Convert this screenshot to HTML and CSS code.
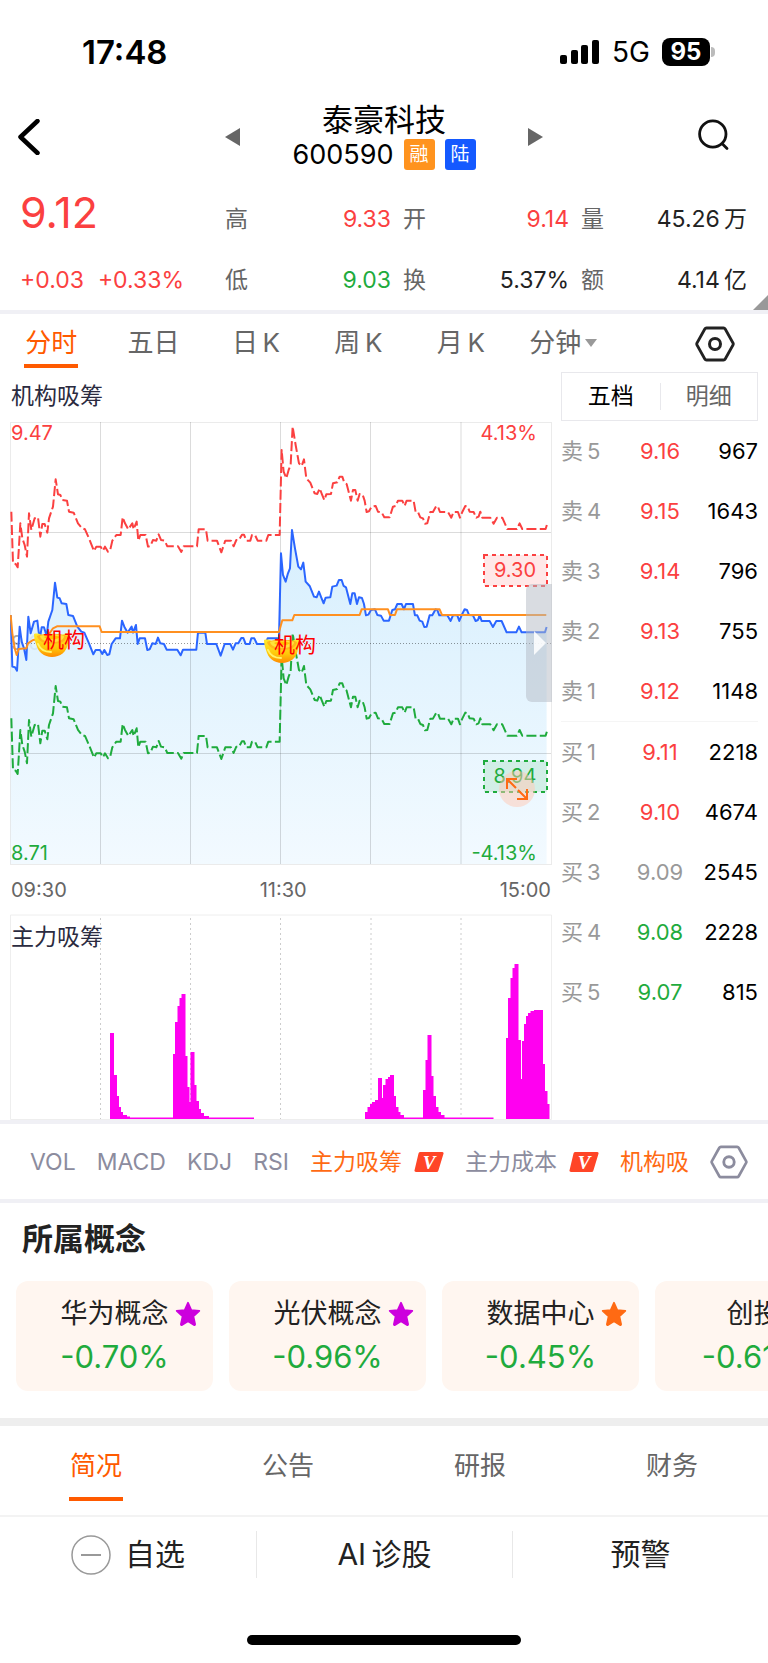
FILE: index.html
```html
<!DOCTYPE html>
<html lang="zh-CN">

<head>
    <meta charset="UTF-8">
    <meta name="viewport" content="width=device-width, initial-scale=1.0">
    <title>泰豪科技 600590</title>
    <link rel="stylesheet" href="styles.css">
</head>

<body>

    <!-- shared shapes -->
    <svg class="defs" width="0" height="0" aria-hidden="true">
        <defs>
            <symbol id="hex" viewBox="0 0 40 36">
                <path d="M11.500 2h17a2 2 0 0 1 1.700 1L38 17a2 2 0 0 1 0 2l-7.800 14a2 2 0 0 1-1.700 1h-17a2 2 0 0 1-1.700-1L2 19a2 2 0 0 1 0-2L9.800 3a2 2 0 0 1 1.700-1z" fill="none" stroke="currentColor" stroke-width="2.800" />
                <circle cx="20" cy="18" r="5.500" fill="none" stroke="currentColor" stroke-width="3" />
            </symbol>
            <symbol id="star" viewBox="0 0 24 24">
                <path d="M12 1.500l3.100 6.800 7.400.8-5.500 5 1.600 7.300c.1.800-.5 1.100-1.100.8L12 18.800l-5.500 3.400c-.6.300-1.200 0-1.100-.8L7 14.100l-5.500-5 7.400-.8z" fill="currentColor" stroke="currentColor" stroke-width="1.500" stroke-linejoin="round" />
            </symbol>
            <symbol id="vip" viewBox="0 0 30 22">
                <path d="M6 1h22a1.500 1.500 0 0 1 1.400 2l-5 16.500a2 2 0 0 1-2 1.500H2a1.500 1.500 0 0 1-1.400-2L4.500 2.500A2 2 0 0 1 6 1z" fill="#ff4527" />
                <text x="15" y="18" text-anchor="middle" class="vip-letter">V</text>
            </symbol>
            <symbol id="ingot" viewBox="0 0 36 26">
                <path d="M0 2c3-1 6 0 8 1h20c2-1 5-2 8-1 0 4-1 7-2 9-1 9-8 14-16 14S4 20 2 12C1 9 0 6 0 2z" fill="url(#gold)" />
                <path d="M3 4c5-3 25-3 30 0 0 5-7 8-15 8S4 9 3 4z" fill="#ffb81a" />
                <path d="M6 4c5-2 19-2 24 0 0 4-6 6-12 6S7 8 6 4z" fill="#ffe23a" />
                <path d="M10 5c4-2 12-2 16 0-2 3-14 3-16 0z" fill="#ffc400" />
                <path d="M4 12c2 5 7 8 13 8" fill="none" stroke="#fff36b" stroke-width="2" stroke-linecap="round" />
            </symbol>
            <linearGradient id="gold" x1="0" y1="0" x2="0" y2="1">
                <stop offset="0" stop-color="#ffe92e" />
                <stop offset=".6" stop-color="#ffc90a" />
                <stop offset="1" stop-color="#ff8a00" />
            </linearGradient>
        </defs>
    </svg>

    <div class="status">
        <span class="clock">17:48</span>
        <div class="status-right">
            <svg width="40" height="24" viewBox="0 0 40 24" aria-hidden="true">
                <rect x="0" y="15" width="7" height="9" rx="2" />
                <rect x="11" y="10" width="7" height="14" rx="2" />
                <rect x="21" y="5" width="7" height="19" rx="2" />
                <rect x="32" y="0" width="7" height="24" rx="2" />
            </svg>
            <span class="network">5G</span>
            <span class="battery">95</span>
        </div>
    </div>

    <header class="header">
        <button class="icon-btn back" type="button" aria-label="返回">
            <svg width="22" height="36" viewBox="0 0 22 36"><path d="M19.500 2L2.500 18l17 16" fill="none" stroke="#000" stroke-width="4.500" stroke-linecap="round" stroke-linejoin="round" /></svg>
        </button>
        <div class="switcher">
            <button class="icon-btn" type="button" aria-label="上一只">
                <svg width="15" height="18" viewBox="0 0 15 18"><path d="M15 0v18L0 9z" fill="#666" /></svg>
            </button>
            <div class="stock">
                <h1>泰豪科技</h1>
                <div class="stock-code">600590 <span class="badge margin">融</span><span class="badge connect">陆</span></div>
            </div>
            <button class="icon-btn" type="button" aria-label="下一只">
                <svg width="15" height="18" viewBox="0 0 15 18"><path d="M0 0v18l15-9z" fill="#666" /></svg>
            </button>
        </div>
        <button class="icon-btn search" type="button" aria-label="搜索">
            <svg width="31" height="35" viewBox="0 0 31 35"><path d="M24 24.500l5 5M28 15a13.200 13.200 0 1 1-26.400 0 13.200 13.200 0 0 1 26.400 0z" fill="none" stroke="#111" stroke-width="2.800" stroke-linecap="round" /></svg>
        </button>
    </header>

    <section class="quote">
        <div class="quote-main">
            <div class="price up">9.12</div>
            <div class="change up"><span>+0.03</span><span>+0.33%</span></div>
        </div>
        <dl class="stats">
            <div><dt>高</dt><dd class="up">9.33</dd></div>
            <div><dt>开</dt><dd class="up">9.14</dd></div>
            <div><dt>量</dt><dd>45.26&thinsp;万</dd></div>
            <div><dt>低</dt><dd class="down">9.03</dd></div>
            <div><dt>换</dt><dd>5.37%</dd></div>
            <div><dt>额</dt><dd>4.14&thinsp;亿</dd></div>
        </dl>
        <svg class="corner" width="15" height="15" viewBox="0 0 15 15" aria-hidden="true"><path d="M15 0v15H0z" fill="#999" /></svg>
    </section>

    <nav class="periods">
        <button type="button" class="active">分时</button>
        <button type="button">五日</button>
        <button type="button">日&thinsp;K</button>
        <button type="button">周&thinsp;K</button>
        <button type="button">月&thinsp;K</button>
        <button type="button">分钟<svg width="12" height="8" viewBox="0 0 12 8" aria-hidden="true"><path d="M0 0h12L6 8z" fill="#999" /></svg></button>
        <button type="button" class="settings" aria-label="设置"><svg width="40" height="36"><use href="#hex" /></svg></button>
    </nav>

    <main class="market">
        <div class="charts">
            <h2 class="chart-title">机构吸筹</h2>
            <div class="chart">
                <svg class="plot" viewBox="0 0 542 443">
                    <defs>
                        <linearGradient id="sky" x1="0" y1="0" x2="0" y2="1">
                            <stop offset="0" stop-color="#d0ecfd" />
                            <stop offset="1" stop-color="#f0f9ff" />
                        </linearGradient>
                        <path id="trend" d="M33 305L38 460 46 462 52 472 55 425 60 340 66 385 73 405 80 440 86 310 93 360 103 325 113 322 120 380 126 342 133 342 141 368 146 325 158 290 166 208 173 253 180 255 186 270 200 272 206 305 220 308 233 340 245 355 254 358 268 390 281 423 288 410 301 410 308 422 314 410 323 425 329 423 336 392 348 375 361 375 367 322 374 340 384 358 396 340 400 358 409 335 414 392 420 375 436 375 443 410 450 408 458 390 468 392 475 373 482 390 493 392 501 409 533 409 543 426 550 409 590 409 595 358 617 358 622 392 650 392 663 427 675 392 692 392 700 409 708 390 716 390 725 374 731 374 738 392 750 392 755 375 764 375 772 392 798 392 804 375 838 375 844 120 850 185 858 205 865 180 871 165 877 50 886 105 896 160 904 168 911 148 918 205 930 218 943 250 951 252 958 235 965 253 972 270 978 253 992 252 998 220 1011 217 1018 200 1026 200 1032 218 1039 222 1052 272 1058 240 1065 240 1072 272 1078 252 1087 254 1093 272 1099 306 1106 304 1114 290 1126 288 1133 305 1144 307 1152 322 1168 322 1178 290 1186 288 1193 272 1206 272 1213 288 1219 272 1240 272 1246 306 1253 306 1260 322 1268 325 1274 341 1281 340 1290 306 1298 306 1308 288 1313 290 1319 306 1343 306 1353 323 1360 306 1373 306 1379 323 1386 306 1395 288 1402 290 1408 305 1420 306 1428 323 1435 320 1440 305 1446 323 1470 323 1480 341 1490 323 1506 323 1521 357 1550 357 1558 340 1566 357 1636 357 1641 341" />
                    </defs>
                    <text x="1" y="228" class="label mid">9.09</text>
                    <g transform="scale(.3333) translate(-31 -36)" fill="none" stroke-linejoin="round">
                        <path d="M33 615L38 770 46 772 52 782 55 735 60 650 66 695 73 715 80 750 86 620 93 670 103 635 113 632 120 690 126 652 133 652 141 678 146 635 158 600 166 518 173 563 180 565 186 580 200 582 206 615 220 618 233 650 245 665 254 668 268 700 281 733 288 720 301 720 308 732 314 720 323 735 329 733 336 702 348 685 361 685 367 632 374 650 384 668 396 650 400 668 409 645 414 702 420 685 436 685 443 720 450 718 458 700 468 702 475 683 482 700 493 702 501 719 533 719 543 736 550 719 590 719 595 668 617 668 622 702 650 702 663 737 675 702 692 702 700 719 708 700 716 700 725 684 731 684 738 702 750 702 755 685 764 685 772 702 798 702 804 685 838 685 844 430 850 495 858 515 865 490 871 475 877 360 886 415 896 470 904 478 911 458 918 515 930 528 943 560 951 562 958 545 965 563 972 580 978 563 992 562 998 530 1011 527 1018 510 1026 510 1032 528 1039 532 1052 582 1058 550 1065 550 1072 582 1078 562 1087 564 1093 582 1099 616 1106 614 1114 600 1126 598 1133 615 1144 617 1152 632 1168 632 1178 600 1186 598 1193 582 1206 582 1213 598 1219 582 1240 582 1246 616 1253 616 1260 632 1268 635 1274 651 1281 650 1290 616 1298 616 1308 598 1313 600 1319 616 1343 616 1353 633 1360 616 1373 616 1379 633 1386 616 1395 598 1402 600 1408 615 1420 616 1428 633 1435 630 1440 615 1446 633 1470 633 1480 651 1490 633 1506 633 1521 667 1550 667 1558 650 1566 667 1636 667 1641 651V1362H33z" fill="url(#sky)" fill-opacity=".85" />
                    </g>
                    <g fill="none" stroke="#000" stroke-opacity=".14" stroke-width="1">
                        <path d="M90.500 0v442M180.500 0v442M270.500 0v442M360.500 0v442M451 0v442M0 110.500h541M0 331.500h541" />
                        <path d="M.5.500h541v442H.5z" stroke-opacity=".08" />
                        <path d="M0 221.500h541" stroke-opacity=".4" stroke-dasharray="1 2" />
                    </g>
                    <g transform="scale(.3333) translate(-31 -36)" fill="none" stroke-linejoin="round">
                        <use href="#trend" y="310" stroke="#2b66ff" stroke-width="6" />
                        <use href="#trend" x="2" y="620" stroke="#1fab3d" stroke-width="6" stroke-dasharray="30 10" />
                        <use href="#trend" x="2" stroke="#fb4040" stroke-width="6" stroke-dasharray="30 10" />
                        <path d="M33 615L38 670 45 715 51 735 57 717 80 715 85 700 100 690 140 685 160 655 172 649H300L306 666H838L848 631H878L884 615H1080L1086 598H1165L1171 615H1186L1192 598H1320L1327 615H1640" stroke="#ff9020" stroke-width="6" />
                    </g>
                    <use href="#ingot" x="24" y="210" width="36" height="26" />
                    <use href="#ingot" x="254" y="216" width="36" height="26" />
                    <text x="33" y="225" class="mark">机构</text>
                    <text x="264" y="230" class="mark">机构</text>
                    <text x="1" y="18" class="label up">9.47</text>
                    <text x="527" y="18" class="label up" text-anchor="end">4.13%</text>
                    <text x="1" y="438" class="label down">8.71</text>
                    <text x="527" y="438" class="label down" text-anchor="end">-4.13%</text>
                    <rect x="474" y="133" width="63" height="31" fill="#fb4040" fill-opacity=".12" stroke="#fb4040" stroke-width="2" stroke-dasharray="4 4" />
                    <text x="505" y="155" class="label up" text-anchor="middle">9.30</text>
                    <rect x="474" y="339" width="63" height="31" fill="#1fab3d" fill-opacity=".12" stroke="#1fab3d" stroke-width="2" stroke-dasharray="4 4" />
                    <text x="505" y="361" class="label down" text-anchor="middle">8.94</text>
                </svg>
                <button class="drawer" type="button" aria-label="收起盘口">
                    <svg width="12" height="24" viewBox="0 0 12 24"><path d="M0 0v24l12-12z" fill="#fff" fill-opacity=".85" /></svg>
                </button>
                <button class="expand" type="button" aria-label="全屏">
                    <svg width="24" height="24" viewBox="0 0 24 24"><path d="M11 11L2 2M2 12V2h10M13 13l9 9M22 12v10H12" fill="none" stroke="#ff6a13" stroke-width="2" /></svg>
                </button>
            </div>
            <div class="times"><span>09:30</span><span>11:30</span><span>15:00</span></div>
            <svg class="plot" viewBox="0 0 542 206">
                <path d="M.5 205.500V1h541v204.500z" fill="none" stroke="#eee" />
                <path d="M90.500 4v201M180.500 4v201M270.500 4v201M361 4v201M451 4v201" stroke="#ccc" stroke-dasharray="2 3" />
                <text x="1" y="31" class="plot-name">主力吸筹</text>
                <g fill="#ff00f0">
                    <path d="M100 205V119h4V161h3V182h2V193h2V198h2V201h4V202.500h3V203.500h43V140h2V108h2.500V92h2V84h2V80h4V142h2V173h2V188h1V138h4V171h2V187h2.500V195h2V199h3V202h5V203.500h45V205z" />
                    <path d="M355 205V198h2.500V193h2.500V190h2V188h3V186h3V164h4V184h1V171h2.500V165h2.500V163h2V161h4V182h2V193h2.500V198h2V201h3.500V203.500h19V176h2.500V146h2V121h4V162h2V182h2.500V193h2.500V198h2.500V201h3.500V203.500h49V205z" />
                    <path d="M496 205V124h2V84h2.500V64h2V54h2V50h4V126h2.500V165h1V127h2V110h2V102h2V99h2.500V97h3.500V96h9V150h2V177h2.500V190h2V205z" />
                </g>
            </svg>
        </div>

        <div class="depth">
            <div class="depth-tabs">
                <button type="button" class="active">五档</button>
                <button type="button">明细</button>
            </div>
            <table>
                <tbody>
                    <tr><th scope="row">卖&thinsp;5</th><td class="up">9.16</td><td>967</td></tr>
                    <tr><th scope="row">卖&thinsp;4</th><td class="up">9.15</td><td>1643</td></tr>
                    <tr><th scope="row">卖&thinsp;3</th><td class="up">9.14</td><td>796</td></tr>
                    <tr><th scope="row">卖&thinsp;2</th><td class="up">9.13</td><td>755</td></tr>
                    <tr><th scope="row">卖&thinsp;1</th><td class="up">9.12</td><td>1148</td></tr>
                </tbody>
                <tbody>
                    <tr><th scope="row">买&thinsp;1</th><td class="up">9.11</td><td>2218</td></tr>
                    <tr><th scope="row">买&thinsp;2</th><td class="up">9.10</td><td>4674</td></tr>
                    <tr><th scope="row">买&thinsp;3</th><td class="flat">9.09</td><td>2545</td></tr>
                    <tr><th scope="row">买&thinsp;4</th><td class="down">9.08</td><td>2228</td></tr>
                    <tr><th scope="row">买&thinsp;5</th><td class="down">9.07</td><td>815</td></tr>
                </tbody>
            </table>
        </div>
    </main>

    <nav class="indicators">
        <button type="button">VOL</button>
        <button type="button">MACD</button>
        <button type="button">KDJ</button>
        <button type="button">RSI</button>
        <button type="button" class="active">主力吸筹<svg width="30" height="22" aria-hidden="true"><use href="#vip" /></svg></button>
        <button type="button">主力成本<svg width="30" height="22" aria-hidden="true"><use href="#vip" /></svg></button>
        <button type="button" class="active">机构吸</button>
        <button type="button" class="settings" aria-label="指标设置"><svg width="38" height="36"><use href="#hex" /></svg></button>
    </nav>

    <section class="concepts">
        <h2>所属概念</h2>
        <div class="cards">
            <a class="card" href="#">
                <span class="card-name"><span>华为概念</span><svg class="star-purple" width="26" height="26" aria-hidden="true"><use href="#star" /></svg></span>
                <span class="card-change down">-0.70%</span>
            </a>
            <a class="card" href="#">
                <span class="card-name"><span>光伏概念</span><svg class="star-purple" width="26" height="26" aria-hidden="true"><use href="#star" /></svg></span>
                <span class="card-change down">-0.96%</span>
            </a>
            <a class="card" href="#">
                <span class="card-name"><span>数据中心</span><svg class="star-orange" width="26" height="26" aria-hidden="true"><use href="#star" /></svg></span>
                <span class="card-change down">-0.45%</span>
            </a>
            <a class="card" href="#">
                <span class="card-name"><span>创投</span></span>
                <span class="card-change down">-0.61%</span>
            </a>
        </div>
    </section>

    <nav class="info-tabs">
        <button type="button" class="active">简况</button>
        <button type="button">公告</button>
        <button type="button">研报</button>
        <button type="button">财务</button>
    </nav>

    <footer class="actions">
        <button type="button">
            <svg width="40" height="40" viewBox="0 0 40 40" aria-hidden="true"><circle cx="20" cy="20" r="19" fill="none" stroke="#999" stroke-width="1.500" /><path d="M10 20h20" stroke="#999" stroke-width="2" /></svg>
            自选
        </button>
        <button type="button">AI&thinsp;诊股</button>
        <button type="button">预警</button>
    </footer>
    <div class="home-bar"></div>

</body>

</html>
```
FILE: styles.css
```css
* {
    box-sizing: border-box;
}

body {
    margin: 0;
    background-color: #ffffff;
    color: #222222;
    font-family: Inter, "Noto Sans CJK SC", sans-serif;
    font-size: 23px;
    overflow-x: hidden;
}

h1, h2, dl, dd {
    margin: 0;
    font-weight: 400;
}

button {
    font: inherit;
    color: inherit;
    background: none;
    border: none;
    padding: 0;
    cursor: pointer;
    white-space: nowrap;
}

svg {
    display: block;
    flex: none;
}

.defs {
    position: absolute;
}

.up {
    color: #fb4040;
    fill: #fb4040;
}

.down {
    color: #1fab3d;
    fill: #1fab3d;
}

.flat {
    color: #999999;
}

/* phone status bar */
.status {
    display: flex;
    justify-content: space-between;
    align-items: center;
    padding: 32px 52px 0 82px;
    line-height: 40px;
    color: #000000;
}

.clock {
    font-size: 33px;
    font-weight: 600;
}

.status-right {
    display: flex;
    align-items: center;
    gap: 12px;
}

.network {
    font-size: 28px;
}

.battery {
    width: 48px;
    line-height: 28px;
    border-radius: 8px;
    background-color: #000000;
    color: #ffffff;
    font-size: 24px;
    font-weight: 700;
    text-align: center;
    margin-right: 6px;
    position: relative;
}

.battery::after {
    content: "";
    position: absolute;
    right: -5px;
    top: 9px;
    width: 4px;
    height: 10px;
    border-radius: 0 4px 4px 0;
    background-color: #bbbbbb;
}

/* title row */
.header {
    display: grid;
    grid-template-columns: 1fr 318px 1fr;
    align-items: center;
    padding-top: 30px;
    color: #000000;
}

.back {
    justify-self: start;
    padding-left: 18px;
}

.search {
    justify-self: end;
    padding-right: 39px;
}

.switcher {
    display: flex;
    justify-content: space-between;
    align-items: center;
}

.stock {
    text-align: center;
}

.stock h1 {
    font-size: 31px;
    line-height: 36px;
}

.stock-code {
    display: flex;
    align-items: center;
    gap: 10px;
    font-size: 27px;
    line-height: 33px;
}

.badge {
    width: 31px;
    line-height: 31px;
    border-radius: 3px;
    color: #ffffff;
    font-size: 19px;
    text-align: center;
}

.margin {
    background-color: #ff931e;
}

.connect {
    background-color: #1459ff;
}

/* quote numbers */
.quote {
    position: relative;
    display: grid;
    grid-template-columns: 193px 1fr;
    gap: 12px;
    align-items: end;
    padding: 17px 21px 15px 20px;
    line-height: 30px;
    border-bottom: 4px solid #f0f0f5;
}

.price {
    font-size: 43px;
    line-height: 48px;
    margin-bottom: 29px;
}

.change {
    display: flex;
    gap: 14px;
    white-space: nowrap;
}

.stats {
    display: grid;
    grid-template-columns: repeat(3, 1fr);
    gap: 31px 12px;
}

.stats div {
    display: flex;
    justify-content: space-between;
}

.stats dt {
    color: #666666;
}

.corner {
    position: absolute;
    right: 0;
    bottom: 0;
}

/* chart periods */
.periods {
    display: grid;
    grid-template-columns: repeat(6, 2fr) 3fr;
    justify-items: center;
    align-items: start;
    padding: 12px 0 4px;
    font-size: 26px;
    line-height: 34px;
    color: #666666;
}

.periods button {
    display: flex;
    align-items: center;
    gap: 4px;
    padding: 0 1px 4px;
    border-bottom: 4px solid transparent;
}

.periods .active {
    color: #ff5a00;
    border-color: #ff5a00;
}

.periods .settings {
    justify-self: end;
    padding: 0 33px 0 0;
    color: #222222;
}

.market {
    display: grid;
    grid-template-columns: 1fr 197px;
    gap: 9px;
    padding: 0 10px;
}

.chart-title {
    padding: 9px 0 11px 1px;
    font-size: 23px;
    line-height: 30px;
    color: #2b2b40;
}

.chart {
    position: relative;
}

.plot {
    width: 100%;
}

.label {
    font-size: 20px;
}

.mid {
    fill: #aaaaaa;
}

.mark {
    font-size: 21px;
    fill: #ff0000;
}

.plot-name {
    font-size: 23px;
    fill: #2b2b40;
}

.drawer {
    position: absolute;
    right: 0;
    top: 162px;
    width: 26px;
    height: 118px;
    padding-left: 8px;
    border-radius: 6px 0 0 6px;
    background-color: rgba(180, 185, 195, 0.5);
}

.expand {
    position: absolute;
    right: 17px;
    top: 349px;
    width: 36px;
    height: 36px;
    padding: 6px;
    border-radius: 50%;
    background-color: rgba(255, 200, 180, 0.5);
}

.times {
    display: flex;
    justify-content: space-between;
    padding: 10px 1px 9px;
    font-size: 20px;
    line-height: 30px;
    color: #666666;
}

/* order book */
.depth-tabs {
    display: grid;
    grid-template-columns: 1fr 1fr;
    border: 1px solid #e8e8ec;
    padding: 10px 0;
    line-height: 27px;
    color: #666666;
}

.depth-tabs button + button {
    border-left: 1px solid #e8e8ec;
}

.depth-tabs .active {
    color: #000000;
}

.depth table {
    width: 100%;
    border-collapse: collapse;
    font-size: 22px;
    line-height: 60px;
    color: #000000;
}

.depth tbody + tbody {
    border-top: 1px solid #f5f5f5;
}

.depth th,
.depth td {
    padding: 0;
    text-align: right;
}

.depth th {
    width: 64px;
    font-weight: 400;
    text-align: left;
    color: #999999;
}

.depth td.up,
.depth td.down,
.depth td.flat {
    width: 70px;
    text-align: center;
}

/* indicator picker */
.indicators {
    display: flex;
    align-items: center;
    gap: 21px;
    padding: 20px 23px 19px 30px;
    border-top: 4px solid #f0f0f5;
    border-bottom: 4px solid #f0f0f5;
    line-height: 31px;
    color: #8c8c9e;
}

.indicators button {
    display: flex;
    align-items: center;
    gap: 12px;
}

.indicators .active {
    color: #ff6a13;
}

.indicators .settings {
    margin-left: auto;
}

.vip-letter {
    font-family: "Liberation Serif", serif;
    font-size: 19px;
    font-style: italic;
    font-weight: 700;
    fill: #ffffff;
}

/* concept cards */
.concepts {
    padding: 16px 0 27px 16px;
    border-bottom: 8px solid #eeeeee;
}

.concepts h2 {
    padding: 0 0 22px 6px;
    font-size: 31px;
    font-weight: 700;
    line-height: 40px;
}

.cards {
    display: flex;
    gap: 16px;
    overflow: hidden;
}

.card {
    flex: 0 0 197px;
    padding: 15px 0 14px;
    border-radius: 12px;
    background-color: #fff6f0;
    color: #222222;
    text-decoration: none;
}

.card-name {
    display: grid;
    grid-template-columns: 1fr auto 1fr;
    align-items: center;
    font-size: 27px;
    line-height: 36px;
    margin-bottom: 5px;
}

.card-name span {
    grid-column: 2;
}

.card-name svg {
    margin-left: 6px;
}

.card-change {
    display: block;
    font-size: 31px;
    line-height: 40px;
    text-align: center;
}

.star-purple {
    color: #cc00dd;
}

.star-orange {
    color: #ff6a13;
}

.info-tabs {
    display: grid;
    grid-template-columns: repeat(4, 1fr);
    justify-items: center;
    padding: 22px 0 14px;
    border-bottom: 2px solid #f3f3f3;
    font-size: 26px;
    line-height: 36px;
    color: #666666;
}

.info-tabs button {
    padding: 0 1px 13px;
    border-bottom: 4px solid transparent;
}

.info-tabs .active {
    color: #ff5a00;
    border-color: #ff5a00;
}

/* bottom actions */
.actions {
    display: grid;
    grid-template-columns: repeat(3, 1fr);
    padding: 14px 0;
    font-size: 30px;
    line-height: 47px;
}

.actions button {
    display: flex;
    justify-content: center;
    align-items: center;
    gap: 14px;
}

.actions button + button {
    border-left: 1px solid #e8e8e8;
}

.home-bar {
    width: 274px;
    height: 10px;
    margin: 43px auto 17px;
    border-radius: 5px;
    background-color: #000000;
}
```
